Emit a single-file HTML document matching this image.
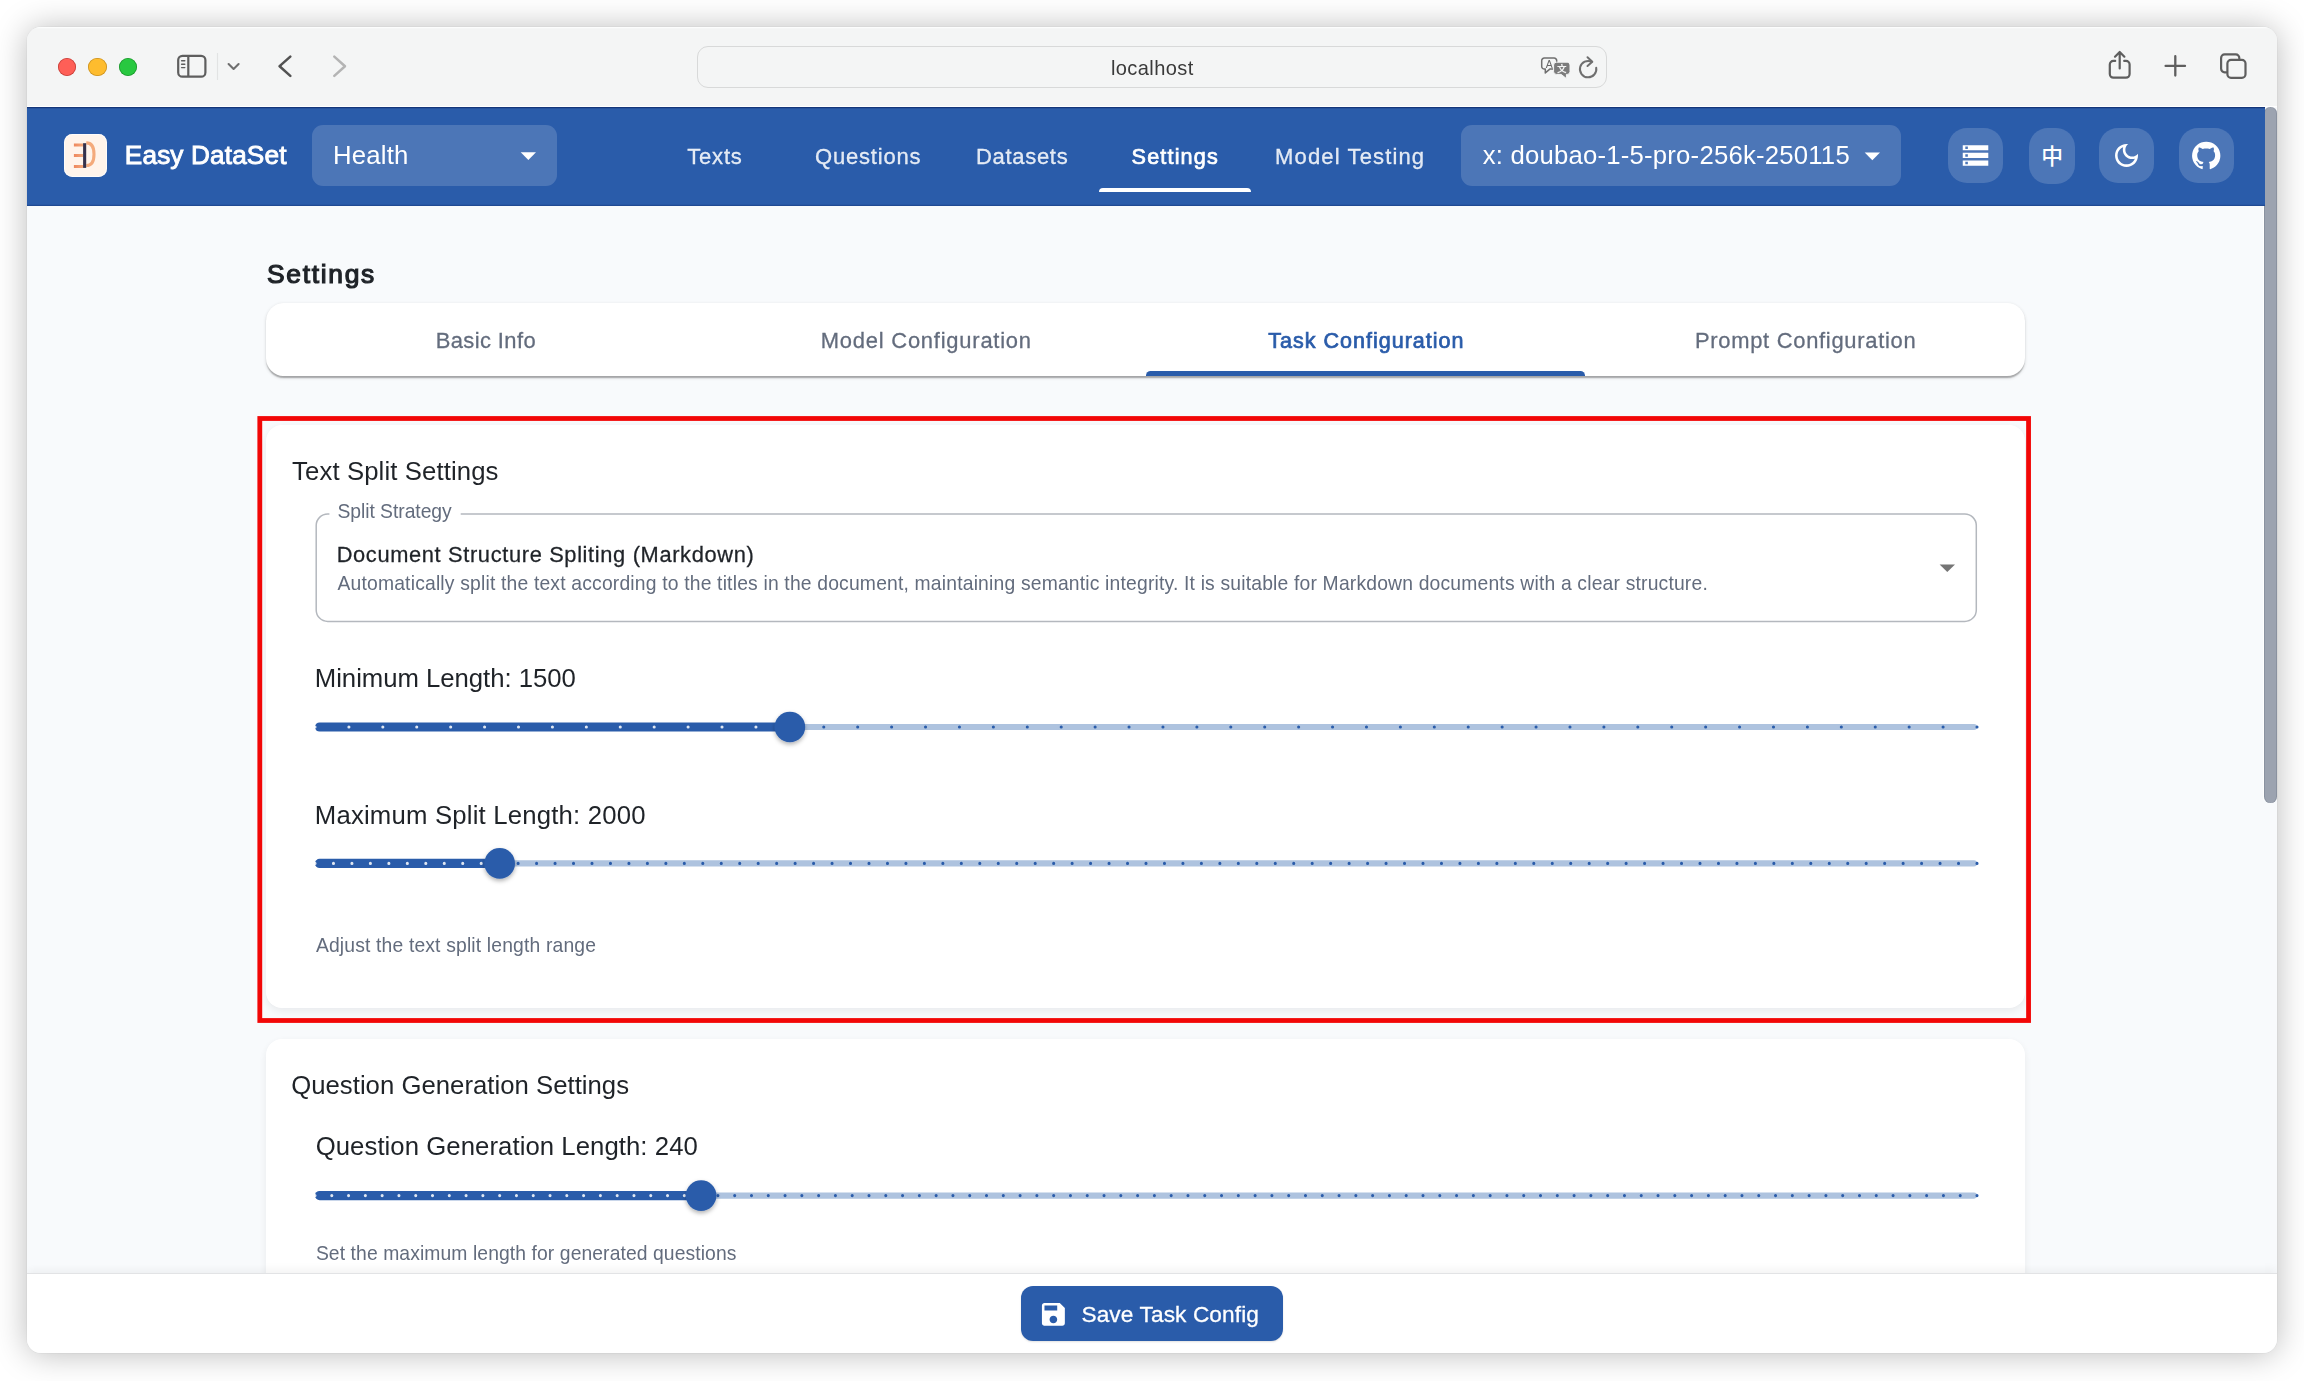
<!DOCTYPE html>
<html lang="en">
<head>
<meta charset="utf-8">
<title>Easy DataSet - Settings</title>
<style>
*{box-sizing:border-box;margin:0;padding:0}
html,body{width:2304px;height:1381px;overflow:hidden;background:#fff}
body{font-family:"Liberation Sans","Noto Sans CJK SC",sans-serif;position:relative}
.win{position:absolute;left:27.3px;top:27.4px;width:2249.5px;height:1326.1px;border-radius:14px;overflow:hidden;background:#F8FAFC;
 box-shadow:0 0 0 .8px rgba(0,0,0,.03),0 1px 33px rgba(0,0,0,.275)}
.pg{opacity:.9999;position:absolute;left:-27.3px;top:-27.4px;width:2304px;height:1381px}
.pg>*{position:absolute}
.t{position:absolute;white-space:nowrap;line-height:1;display:block}
.m{-webkit-text-stroke:.013em currentColor}
.sb{-webkit-text-stroke:.034em currentColor}
.sb2{-webkit-text-stroke:.046em currentColor}
.toolbar{left:27px;top:27px;width:2250px;height:79.5px;background:#f4f5f5;box-shadow:inset 0 1.2px 0 rgba(255,255,255,.75)}
.tl{width:18.4px;height:18.4px;border-radius:50%;top:57.8px}
.url{left:697px;top:46px;width:910px;height:41.5px;border:1.3px solid #d8d9d9;border-radius:11px;background:#f4f5f5}
.appbar{left:27px;top:107px;width:2237.5px;height:98.6px;background:#2A5CAA;box-shadow:inset 0 1.2px 0 rgba(8,28,90,.6),inset 0 -1.2px 0 rgba(8,28,90,.28)}
.sel{background:rgba(255,255,255,.16);border-radius:11px;top:125px;height:61px}
.ib{background:rgba(255,255,255,.16);border-radius:19px;top:128.2px;height:54.5px;width:54.5px}
.card{background:#fff;border-radius:16px;box-shadow:0 3px 10px rgba(20,30,45,.075)}
svg{position:absolute;left:0;top:0;overflow:visible}
</style>
</head>
<body>
<div class="win"><div class="pg">

<!-- page background + scrollbar -->
<div style="left:2264.5px;top:106.5px;width:12.5px;height:1167px;background:#F8FAFC"></div>
<div style="left:2263.2px;top:205.6px;width:1.3px;height:594px;background:#fff"></div>
<div style="left:2264.3px;top:107.3px;width:12.6px;height:696.2px;border-radius:6.3px;background:#9CA3B0;box-shadow:inset 1px 0 0 rgba(60,70,90,.18),inset -1px 0 0 rgba(60,70,90,.18)"></div>

<!-- Safari toolbar -->
<div class="toolbar"></div>
<div style="left:27px;top:106px;width:2250px;height:1px;background:#fff"></div>
<div class="tl" style="left:57.8px;background:#FE5F57;box-shadow:inset 0 0 0 .8px rgba(150,30,25,.55)"></div>
<div class="tl" style="left:88.3px;background:#FEBC2E;box-shadow:inset 0 0 0 .8px rgba(160,110,15,.55)"></div>
<div class="tl" style="left:119.1px;background:#28C840;box-shadow:inset 0 0 0 .8px rgba(15,110,25,.55)"></div>
<div class="url"></div>

<!-- App bar -->
<div class="appbar"></div>
<div style="left:64.2px;top:133.8px;width:42.8px;height:43.2px;border-radius:8.5px;background:#FFF4EB;box-shadow:inset 0 0 0 1px rgba(255,255,255,.75)"></div>
<div class="sel" style="left:312px;width:244.5px"></div>
<div class="sel" style="left:1460.8px;width:440.2px"></div>
<div style="left:1098.6px;top:187.6px;width:152.9px;height:4.8px;background:#fff;border-radius:4.6px 4.6px 0 0"></div>
<div class="ib" style="left:1948.3px"></div>
<div class="ib" style="left:2029.1px;width:45.6px;top:127.6px;height:56.2px"></div>
<div class="ib" style="left:2099.3px"></div>
<div class="ib" style="left:2179px"></div>
<span class="t" style="left:2041.2px;top:143.9px;font-size:21.8px;font-weight:500;color:#fff;font-family:'Noto Sans CJK SC','Liberation Sans',sans-serif">中</span>

<!-- Settings tabs card -->
<div class="card" style="left:266px;top:302.8px;width:1759.4px;height:73.5px;border-radius:18px;box-shadow:0 3px 1.5px -1.5px rgba(0,0,0,.17),0 1.5px 1.5px rgba(0,0,0,.14),0 1.5px 4.5px rgba(0,0,0,.12);overflow:hidden">
 <div style="position:absolute;left:879.5px;bottom:0;width:439.7px;height:5px;background:#2A5CAA;border-radius:4.6px 4.6px 0 0"></div>
</div>

<!-- Card 1 / Card 2 -->
<div class="card" style="left:266px;top:425px;width:1759.4px;height:583.2px"></div>
<div class="card" style="left:266px;top:1039px;width:1759.4px;height:300px"></div>
<!-- red highlight -->

<!-- footer -->
<div style="left:27px;top:1273.3px;width:2250px;height:81px;background:#fff;border-top:1.4px solid #e2e3e5;box-shadow:0 -3px 9px rgba(0,0,0,.055)"></div>
<div style="left:1020.6px;top:1286.2px;width:262.7px;height:55px;border-radius:12px;background:#2A5CAA;box-shadow:0 1px 2px rgba(0,0,0,.12)"></div>

<svg width="2304" height="1381" viewBox="0 0 2304 1381">
<defs>
<filter id="ts" x="-40%" y="-40%" width="180%" height="200%"><feDropShadow dx="0" dy="2.2" stdDeviation="2" flood-color="#000" flood-opacity=".3"/></filter>
<linearGradient id="og" gradientUnits="userSpaceOnUse" x1="73.900" y1="0" x2="83.200" y2="0"><stop offset="0" stop-color="#EE875C"/><stop offset="1" stop-color="#F4A97C"/></linearGradient>
</defs>
<rect x="259.8" y="418.5" width="1768.75" height="602" fill="none" stroke="#F20707" stroke-width="4.8"/>
<rect x="316.2" y="514" width="1660.1" height="107.4" rx="11.5" fill="none" stroke="#b4b8be" stroke-width="1.5"/>
<rect x="329.4" y="510" width="131.3" height="8" fill="#fff"/>
<!-- Safari toolbar icons -->
<g fill="none" stroke="#5e5e5e" stroke-width="2.2" stroke-linecap="round" stroke-linejoin="round">
 <rect x="178.2" y="55.8" width="27.2" height="20.9" rx="4.3"/>
 <line x1="188.3" y1="56" x2="188.3" y2="76.5" stroke-linecap="butt"/>
 <g stroke-width="1.4"><line x1="181.6" y1="60.8" x2="184.8" y2="60.8"/><line x1="181.6" y1="64.2" x2="184.8" y2="64.2"/><line x1="181.6" y1="67.6" x2="184.8" y2="67.6"/></g>
 <polyline points="228.6,64.1 233.6,68.9 238.6,64.1" stroke="#6f6f6f" stroke-width="2.1"/>
 <polyline points="290.3,56.6 279.6,66.2 290.3,75.9" stroke="#525252" stroke-width="2.5"/>
 <polyline points="334.3,56.6 345,66.2 334.3,75.9" stroke="#b4b4b4" stroke-width="2.5"/>
 <!-- share -->
 <path d="M2115.2 60.9H2113.4a3.6 3.6 0 0 0 -3.6 3.6V74.1a3.6 3.6 0 0 0 3.6 3.6H2126a3.6 3.6 0 0 0 3.600 -3.6V64.5a3.6 3.6 0 0 0 -3.6 -3.6H2124.200"/>
 <path d="M2119.7 68.400V52.300M2115 56.700L2119.700 52L2124.400 56.700"/>
 <!-- plus -->
 <path d="M2165.600 65.900H2185M2175.300 56.200V75.600" stroke-width="2.300"/>
 <!-- tabs -->
 <path d="M2226.3 72.300H2224.600a3.500 3.500 0 0 1 -3.500 -3.500V57.900a3.500 3.500 0 0 1 3.500 -3.500H2235.800a3.500 3.500 0 0 1 3.500 3.500V58.800"/>
 <rect x="2227.400" y="59.900" width="18.100" height="17.900" rx="3.600"/>
</g>
<line x1="217.500" y1="53" x2="217.500" y2="80" stroke="#e2e3e3" stroke-width="1.200"/>
<!-- translate -->
<g>
 <path d="M1544.300 58.100H1554.100a2.600 2.600 0 0 1 2.600 2.600V66.500a2.600 2.600 0 0 1 -2.600 2.600H1549.800L1545.300 72.900V69.100H1544.300a2.600 2.600 0 0 1 -2.600 -2.600V60.700a2.600 2.600 0 0 1 2.600 -2.600Z" fill="none" stroke="#6f6f6f" stroke-width="1.500" stroke-linejoin="round"/>
 <path d="M1556.400 62.200H1567.200a2.800 2.800 0 0 1 2.800 2.800V71.600a2.800 2.800 0 0 1 -2.800 2.800H1566.400V78.600L1561.200 74.400H1556.400a2.800 2.800 0 0 1 -2.800 -2.800V65a2.800 2.800 0 0 1 2.800 -2.800Z" fill="#7b7b7b" stroke="#f4f5f5" stroke-width="1"/>
 <text x="1549.100" y="67.500" font-family="Liberation Sans, sans-serif" font-size="10.400" text-anchor="middle" fill="#666">A</text>
 <text x="1561.800" y="72.100" font-family="Noto Sans CJK SC, sans-serif" font-size="9.600" font-weight="700" text-anchor="middle" fill="#f4f5f5">文</text>
</g>
<!-- reload -->
<g fill="none" stroke="#6f6f6f" stroke-width="2" stroke-linecap="round" stroke-linejoin="round">
 <path d="M1591.800 61.800A8.200 8.200 0 1 0 1596.200 67.700"/>
 <path d="M1587.500 57.300L1592.300 61.700L1587.500 66"/>
</g>
<!-- logo -->
<g>
 <path d="M73.900 144.900H83.200M73.900 155.500H83.200M73.900 166.450H83.200" stroke="url(#og)" stroke-width="3" fill="none"/>
 <path d="M86.300 142.900C91.700 142.900 94 147 94 154.200C94 161.400 91.700 165.500 86.300 165.500" stroke="#F4AA7B" stroke-width="3.100" fill="none"/>
 <rect x="83.100" y="143.200" width="3.100" height="24.700" fill="#35314B"/>
</g>
<!-- dropdown arrows -->
<path d="M520.700 152.200H536L528.350 159.900Z" fill="#fff"/>
<path d="M1864.700 152.600H1880L1872.350 160.300Z" fill="#fff"/>
<path d="M1939.600 564.400H1955L1947.300 572.100Z" fill="#757575"/>
<!-- storage -->
<g transform="translate(1960.200 140.100) scale(1.2767)" fill="#fff"><path d="M2 20h20v-4H2zm2-3h2v2H4zM2 4v4h20V4zm4 3H4V5h2zm-4 7h20v-4H2zm2-3h2v2H4z"/></g>
<!-- moon -->
<g transform="translate(2111.200 140.100) scale(1.2767)" fill="#fff"><path d="M9.370 5.510c-.18.640-.27 1.310-.27 1.990 0 4.080 3.320 7.400 7.400 7.400.68 0 1.350-.09 1.990-.27C17.450 17.190 14.930 19 12 19c-3.860 0-7-3.140-7-7 0-2.930 1.810-5.450 4.370-6.490M12 3c-4.970 0-9 4.030-9 9s4.030 9 9 9 9-4.030 9-9c0-.46-.04-.92-.1-1.360-.98 1.370-2.580 2.260-4.400 2.260-2.980 0-5.400-2.420-5.400-5.400 0-1.810.89-3.420 2.260-4.400-.44-.06-.9-.1-1.360-.1"/></g>
<!-- github -->
<g transform="translate(2190.900 140.100) scale(1.2767)" fill="#fff"><path d="M12 1.270a11 11 0 00-3.480 21.460c.55.090.73-.28.730-.55v-1.840c-3.030.64-3.670-1.460-3.670-1.460-.55-1.290-1.280-1.650-1.280-1.650-.92-.65.100-.65.100-.65 1.100 0 1.730 1.100 1.730 1.100.92 1.650 2.570 1.200 3.210.92a2 2 0 01.640-1.470c-2.470-.27-5.040-1.190-5.040-5.500 0-1.100.46-2.100 1.200-2.840a3.760 3.760 0 010-2.930s.91-.28 3.110 1.100c1.800-.49 3.700-.49 5.500 0 2.100-1.380 3.020-1.100 3.020-1.100a3.760 3.760 0 010 2.930c.83.740 1.200 1.740 1.200 2.940 0 4.210-2.570 5.130-5.040 5.400.45.370.82.920.82 2.020v3.030c0 .27.100.64.730.55A11 11 0 0012 1.270"/></g>
<!-- save -->
<g transform="translate(1038.100 1299.100) scale(1.274)" fill="#fff"><path d="M17 3H5c-1.110 0-2 .9-2 2v14c0 1.100.89 2 2 2h14c1.100 0 2-.9 2-2V7zm-5 16c-1.660 0-3-1.340-3-3s1.340-3 3-3 3 1.340 3 3-1.340 3-3 3m3-10H5V5h10z"/></g>

<line x1="318.0" y1="727.0" x2="1974.0" y2="727.0" stroke="#AEC3DF" stroke-width="6.1" stroke-linecap="round"/>
<line x1="319.6" y1="727.0" x2="789.9" y2="727.0" stroke="#2A5CAA" stroke-width="9.2" stroke-linecap="round"/>
<line x1="315.00" y1="727.0" x2="772.90" y2="727.0" stroke="#fff" stroke-opacity=".85" stroke-width="3.1" stroke-linecap="round" stroke-dasharray="0 33.9184"/>
<line x1="823.78" y1="727.0" x2="1978.00" y2="727.0" stroke="#2A5CAA" stroke-width="3.1" stroke-linecap="round" stroke-dasharray="0 33.9184"/>
<circle cx="789.9" cy="727.0" r="15.3" fill="#2A5CAA" filter="url(#ts)"/>
<line x1="318.0" y1="863.4" x2="1974.0" y2="863.4" stroke="#AEC3DF" stroke-width="6.1" stroke-linecap="round"/>
<line x1="319.6" y1="863.4" x2="499.7" y2="863.4" stroke="#2A5CAA" stroke-width="9.2" stroke-linecap="round"/>
<line x1="315.00" y1="863.4" x2="490.43" y2="863.4" stroke="#fff" stroke-opacity=".85" stroke-width="3.1" stroke-linecap="round" stroke-dasharray="0 18.4667"/>
<line x1="518.13" y1="863.4" x2="1978.00" y2="863.4" stroke="#2A5CAA" stroke-width="3.1" stroke-linecap="round" stroke-dasharray="0 18.4667"/>
<circle cx="499.7" cy="863.4" r="15.3" fill="#2A5CAA" filter="url(#ts)"/>
<line x1="318.0" y1="1195.6" x2="1974.0" y2="1195.6" stroke="#AEC3DF" stroke-width="6.1" stroke-linecap="round"/>
<line x1="319.6" y1="1195.6" x2="701.1" y2="1195.6" stroke="#2A5CAA" stroke-width="9.2" stroke-linecap="round"/>
<line x1="315.00" y1="1195.6" x2="692.73" y2="1195.6" stroke="#fff" stroke-opacity=".85" stroke-width="3.1" stroke-linecap="round" stroke-dasharray="0 16.7879"/>
<line x1="717.91" y1="1195.6" x2="1978.00" y2="1195.6" stroke="#2A5CAA" stroke-width="3.1" stroke-linecap="round" stroke-dasharray="0 16.7879"/>
<circle cx="701.1" cy="1195.6" r="15.3" fill="#2A5CAA" filter="url(#ts)"/>
</svg>

<span class="t" style="left:1110.90px;top:57.92px;font-size:20.06px;letter-spacing:0.406px;color:#3a3a3a;">localhost</span>
<span class="t sb" style="left:124.85px;top:141.52px;font-size:26.2px;letter-spacing:0.133px;color:#fff;">Easy DataSet</span>
<span class="t" style="left:332.90px;top:142.82px;font-size:25.73px;letter-spacing:0.212px;color:#fff;">Health</span>
<span class="t m" style="left:687.14px;top:146.05px;font-size:22.03px;letter-spacing:0.835px;color:rgba(255,255,255,.86);">Texts</span>
<span class="t m" style="left:815.04px;top:146.05px;font-size:22.03px;letter-spacing:0.800px;color:rgba(255,255,255,.86);">Questions</span>
<span class="t m" style="left:975.94px;top:146.05px;font-size:22.03px;letter-spacing:0.692px;color:rgba(255,255,255,.86);">Datasets</span>
<span class="t sb" style="left:1131.57px;top:146.42px;font-size:21.6px;letter-spacing:1.163px;color:#fff;">Settings</span>
<span class="t m" style="left:1275.04px;top:146.05px;font-size:22.03px;letter-spacing:1.135px;color:rgba(255,255,255,.86);">Model Testing</span>
<span class="t" style="left:1482.70px;top:143.42px;font-size:25.73px;letter-spacing:0.205px;color:#fff;">x: doubao-1-5-pro-256k-250115</span>
<span class="t sb2" style="left:267.01px;top:261.05px;font-size:26.4px;letter-spacing:1.703px;color:#1f2328;">Settings</span>
<span class="t m" style="left:435.74px;top:330.04px;font-size:21.93px;letter-spacing:0.405px;color:#636c7d;">Basic Info</span>
<span class="t m" style="left:820.84px;top:330.04px;font-size:21.93px;letter-spacing:0.778px;color:#636c7d;">Model Configuration</span>
<span class="t sb" style="left:1268.27px;top:331.40px;font-size:21.5px;letter-spacing:1.009px;color:#2A5CAA;">Task Configuration</span>
<span class="t m" style="left:1694.94px;top:330.04px;font-size:21.93px;letter-spacing:0.714px;color:#636c7d;">Prompt Configuration</span>
<span class="t" style="left:292.10px;top:458.52px;font-size:25.73px;letter-spacing:0.108px;color:#1f2328;">Text Split Settings</span>
<span class="t" style="left:337.50px;top:502.15px;font-size:19.32px;letter-spacing:-0.054px;color:#636c7d;">Split Strategy</span>
<span class="t m" style="left:336.64px;top:543.52px;font-size:21.83px;letter-spacing:0.649px;color:#1f2328;">Document Structure Spliting (Markdown)</span>
<span class="t" style="left:337.50px;top:573.85px;font-size:19.32px;letter-spacing:0.178px;color:#636c7d;">Automatically split the text according to the titles in the document, maintaining semantic integrity. It is suitable for Markdown documents with a clear structure.</span>
<span class="t" style="left:314.80px;top:666.12px;font-size:25.73px;letter-spacing:-0.032px;color:#1f2328;">Minimum Length: 1500</span>
<span class="t" style="left:314.80px;top:803.12px;font-size:25.73px;letter-spacing:0.194px;color:#1f2328;">Maximum Split Length: 2000</span>
<span class="t" style="left:315.90px;top:935.85px;font-size:19.32px;letter-spacing:0.158px;color:#636c7d;">Adjust the text split length range</span>
<span class="t" style="left:291.20px;top:1072.52px;font-size:25.73px;letter-spacing:0.017px;color:#1f2328;">Question Generation Settings</span>
<span class="t" style="left:315.70px;top:1133.92px;font-size:25.73px;letter-spacing:0.059px;color:#1f2328;">Question Generation Length: 240</span>
<span class="t" style="left:315.90px;top:1243.85px;font-size:19.32px;letter-spacing:0.089px;color:#636c7d;">Set the maximum length for generated questions</span>
<span class="t m" style="left:1081.45px;top:1303.74px;font-size:22.64px;letter-spacing:0.122px;color:#fff;">Save Task Config</span>
</div></div>
</body>
</html>
